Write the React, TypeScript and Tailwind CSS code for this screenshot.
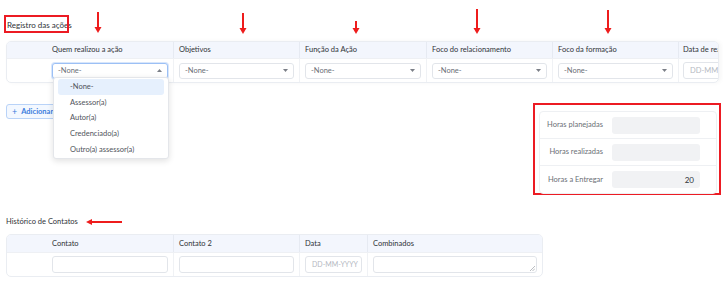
import React from 'react';

const ff = { fontFamily: 'Lato, "Liberation Sans", sans-serif' };

const acoesCols = ['Quem realizou a ação', 'Objetivos', 'Função da Ação', 'Foco do relacionamento', 'Foco da formação'];
const opcoes = ['-None-', 'Assessor(a)', 'Autor(a)', 'Credenciado(a)', 'Outro(a) assessor(a)'];

// seta vermelha para baixo (anotação)
const DownArrow = ({ left, top, h }: { left: number; top: number; h: number }) => (
  <svg className="absolute" style={{ left: left - 4, top }} width="8" height={h} viewBox={`0 0 8 ${h}`}>
    <line x1="4" y1="0" x2="4" y2={h - 5} stroke="#ee1c1c" strokeWidth="2" />
    <polygon points={`0.5,${h - 6} 7.5,${h - 6} 4,${h}`} fill="#ee1c1c" />
  </svg>
);

const Caret = ({ up }: { up?: boolean }) => (
  <svg width="5" height="3" viewBox="0 0 5 3" className="shrink-0">
    <polygon points={up ? '0,3 5,3 2.5,0' : '0,0 5,0 2.5,3'} fill="#7b7f87" />
  </svg>
);

const Select = ({ focused }: { focused?: boolean }) => (
  <div
    className={`flex h-[16px] w-full items-center justify-between rounded-[3px] border bg-white pl-[5px] pr-[5px] text-[7.5px] text-[#6b6f76] ${
      focused ? 'border-[#9cc0f5] shadow-[0_0_0_1px_#d8e6fb]' : 'border-[#e2e5ea]'
    }`}
  >
    <span>-None-</span>
    <Caret up={focused} />
  </div>
);

const Input = ({ className = '', children }: { className?: string; children?: React.ReactNode }) => (
  <div className={`h-[17px] rounded-[3px] border border-[#e2e5ea] bg-white ${className}`}>{children}</div>
);

export default function App() {
  return (
    <div className="relative h-[289px] w-[723px] overflow-hidden bg-white text-[#2f3237]" style={ff}>
      <div className="pl-[6px] pt-[19px]">
        {/* Registro das ações */}
        <div className="h-[12px] pl-[1px] text-[8px] leading-[12px] text-[#2f3237]">Registro das ações</div>

        <div className="mt-[10px] w-[713px] overflow-hidden rounded-[5px] border border-[#eaedf2] shadow-[2px_0_4px_rgba(0,0,0,0.04)]">
          <div className="grid h-[16px] grid-cols-[40px_127px_126px_127px_126px_126px_80px] bg-[#f3f6fd] text-[7.5px] leading-[16px]">
            <div />
            {acoesCols.map((c) => (
              <div key={c} className="border-r border-[#e6eaf2] pl-[5px]">{c}</div>
            ))}
            <div className="overflow-hidden whitespace-nowrap pl-[4px]">Data de rea</div>
          </div>
          <div className="grid h-[24px] grid-cols-[40px_127px_126px_127px_126px_126px_80px] border-t border-[#eef0f4]">
            <div />
            {acoesCols.map((c, i) => (
              <div key={c} className="flex items-center border-r border-[#f0f2f5] pl-[5px] pr-[5px]">
                <Select focused={i === 0} />
              </div>
            ))}
            <div className="flex items-center overflow-hidden pl-[4px]">
              <Input className="flex w-[80px] shrink-0 items-center pl-[6px] text-[7.5px] text-[#b4b8bf]">DD-MM-Y</Input>
            </div>
          </div>
        </div>
      </div>

      {/* Adicionar + horas */}
      <div className="mt-[20px] flex justify-between pl-[6px]">
        <div className="pt-[1px]">
          <div className="flex h-[15px] items-center gap-[4px] rounded-[3px] border border-[#b9d3f8] bg-[#f3f8ff] pl-[5px] pr-[6px] text-[7.5px] font-bold text-[#3b7ddd]">
            <span className="text-[9px] font-normal leading-none">+</span>
            <span>Adicionar linha</span>
          </div>
        </div>

        <div className="mr-[2px] h-[92px] w-[188px] border-2 border-[#ec1b23] pl-[4px] pt-[6px]">
          <div className="w-[178px] rounded-[4px] border border-[#eef0f3] text-[7.5px] text-[#6b6f76]">
            {[
              ['Horas planejadas', ''],
              ['Horas realizadas', ''],
              ['Horas a Entregar', '20'],
            ].map(([label, val], i) => (
              <div
                key={label}
                className={`flex h-[27px] items-center ${i < 2 ? 'border-b border-[#eef0f3]' : ''}`}
              >
                <div className="w-[63px] text-right">{label}</div>
                <div className="ml-[9px] flex h-[17px] w-[88px] items-center justify-end rounded-[3px] bg-[#f1f2f4] pr-[6px] text-[8px] text-[#2f3237]">
                  {val}
                </div>
              </div>
            ))}
          </div>
        </div>
      </div>

      {/* Histórico de Contatos */}
      <div className="mt-[22px] pl-[6px]">
        <div className="flex h-[10px] items-center text-[7.5px] leading-[10px]">
          <span>Histórico de Contatos</span>
          <svg className="ml-[8px]" width="36" height="6" viewBox="0 0 36 6">
            <line x1="5" y1="3" x2="36" y2="3" stroke="#ee1c1c" strokeWidth="2" />
            <polygon points="0,3 6,0 6,6" fill="#ee1c1c" />
          </svg>
        </div>

        <div className="mt-[7px] w-[537px] overflow-hidden rounded-[5px] border border-[#eaedf2]">
          <div className="grid h-[17px] grid-cols-[40px_127px_126px_68px_174px] bg-[#f3f6fd] text-[7.5px] leading-[17px]">
            <div />
            <div className="border-r border-[#e6eaf2] pl-[5px]">Contato</div>
            <div className="border-r border-[#e6eaf2] pl-[5px]">Contato 2</div>
            <div className="border-r border-[#e6eaf2] pl-[5px]">Data</div>
            <div className="pl-[5px]">Combinados</div>
          </div>
          <div className="grid h-[24px] grid-cols-[40px_127px_126px_68px_174px] border-t border-[#eef0f4]">
            <div />
            <div className="flex items-center border-r border-[#f0f2f5] px-[5px]">
              <Input className="w-full" />
            </div>
            <div className="flex items-center border-r border-[#f0f2f5] px-[5px]">
              <Input className="w-full" />
            </div>
            <div className="flex items-center border-r border-[#f0f2f5] px-[5px]">
              <Input className="flex w-full items-center pl-[6px] text-[7px] text-[#b4b8bf]">DD-MM-YYYY</Input>
            </div>
            <div className="flex items-center px-[5px]">
              <Input className="relative w-full">
                <svg className="absolute bottom-[1px] right-[1px]" width="6" height="6" viewBox="0 0 6 6">
                  <line x1="1" y1="6" x2="6" y2="1" stroke="#9ca0a8" strokeWidth="0.7" />
                  <line x1="3.5" y1="6" x2="6" y2="3.5" stroke="#9ca0a8" strokeWidth="0.7" />
                </svg>
              </Input>
            </div>
          </div>
        </div>
      </div>

      {/* dropdown aberto */}
      <div className="absolute left-[53px] top-[77px] w-[116px] rounded-[3px] border border-[#e4e6ea] bg-white px-[4px] py-[1px] text-[7.5px] text-[#50545b] shadow-[0_2px_6px_rgba(0,0,0,0.12)]">
        {opcoes.map((o, i) => (
          <div
            key={o}
            className={`flex h-[15.6px] items-center pl-[12px] ${i === 0 ? 'rounded-[3px] bg-[#e6f0fd]' : ''}`}
          >
            {o}
          </div>
        ))}
      </div>

      {/* anotações */}
      <div className="pointer-events-none absolute left-[4px] top-[15px] h-[18px] w-[65px] border-2 border-[#ec1b23]" />
      <DownArrow left={98} top={12} h={21} />
      <DownArrow left={243} top={13} h={21} />
      <DownArrow left={356} top={21} h={13} />
      <DownArrow left={477} top={9} h={25} />
      <DownArrow left={608} top={10} h={24} />
    </div>
  );
}
